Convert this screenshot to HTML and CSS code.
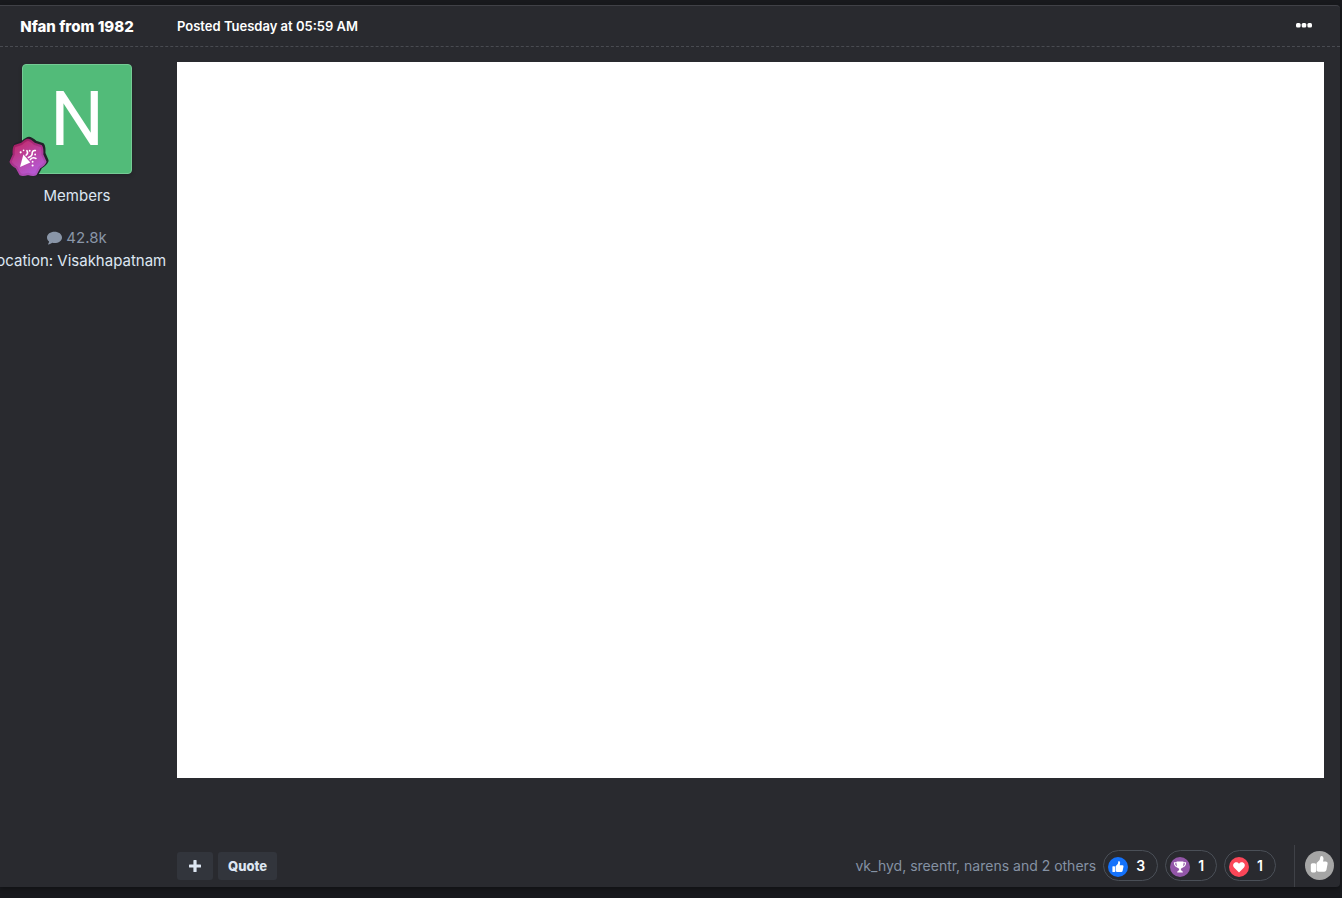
FILE: index.html
```html
<!DOCTYPE html>
<html lang="en">
<head>
    <meta charset="UTF-8">
    <meta name="viewport" content="width=device-width, initial-scale=1.0">
    <title>Topic post</title>
    <link rel="stylesheet" href="styles.css">
</head>
<body>
    <article class="post">
        <header class="post-header">
            <h3 class="author-name"><a href="#">Nfan from 1982</a></h3>
            <a class="post-date" href="#">Posted Tuesday at 05:59 AM</a>
            <button class="more-button" type="button" aria-label="More options">
                <svg width="16" height="6" viewBox="0 0 16 6" fill="currentColor">
                    <rect x="0" y="1" width="4.6" height="4.4" rx="1.5"/>
                    <rect x="5.7" y="1" width="4.6" height="4.4" rx="1.5"/>
                    <rect x="11.4" y="1" width="4.6" height="4.4" rx="1.5"/>
                </svg>
            </button>
        </header>

        <div class="post-body">
            <aside class="author">
                <div class="avatar">
                    <a class="avatar-photo" href="#">N</a>
                    <svg class="rank-badge" width="42" height="44" viewBox="0 0 40 40" preserveAspectRatio="none">
                        <defs>
                            <linearGradient id="rank-fill" x1="0.2" y1="0" x2="0.8" y2="1">
                                <stop offset="0" stop-color="#c22a68"/>
                                <stop offset="1" stop-color="#b45ee0"/>
                            </linearGradient>
                            <linearGradient id="rank-edge" x1="0.2" y1="0" x2="0.8" y2="1">
                                <stop offset="0" stop-color="#a3195b"/>
                                <stop offset="1" stop-color="#b055c8"/>
                            </linearGradient>
                            <path id="rank-shape" stroke-linejoin="round" d="M20 3.6 Q22 3.6 26.1 7.2 L32.6 9.2 Q34 11 33.6 16.9 L36.6 23.4 Q35.6 26 30.9 28.7 L27.4 34.8 Q25 36 20 34.4 Q15 36 12.6 34.8 L9.1 28.7 Q4.4 26 3.4 23.4 L6.4 16.9 Q6 11 7.4 9.2 L13.9 7.2 Q18 3.6 20 3.6Z"/>
                        </defs>
                        <use href="#rank-shape" x="1" y="-1" fill="#212329" stroke="#212329" stroke-width="4"/>
                        <use href="#rank-shape" fill="url(#rank-fill)" stroke="url(#rank-edge)" stroke-width="2"/>
                        <path fill="#fff" d="M15.6 16.8 L22.2 24.2 L12.4 28.2Z"/>
                        <path fill="none" stroke="#fff" stroke-width="1.5" stroke-linecap="round" d="M18.2 17.4 Q20.6 15.8 19 13.4 M20.4 19.6 Q24.4 18.4 24 15.2 Q24.4 12.8 27 13.2 M22.2 21.4 Q24.4 18.8 27.6 20.4"/>
                        <g fill="#fff">
                            <circle cx="13" cy="14.8" r="1"/>
                            <circle cx="15.8" cy="13" r="0.8"/>
                            <circle cx="21.6" cy="13.4" r="0.9"/>
                            <circle cx="26.8" cy="16.8" r="0.9"/>
                            <circle cx="24.4" cy="23.4" r="0.9"/>
                            <circle cx="24.4" cy="26.8" r="1"/>
                        </g>
                    </svg>
                </div>
                <div class="author-group">Members</div>
                <ul class="author-stats">
                    <li>
                        <a class="post-count" href="#">
                            <svg width="15" height="14" viewBox="0 0 15 14" fill="currentColor">
                                <path d="M7.5 0.8C11.6 0.8 15 3.2 15 6.4S11.6 12 7.5 12c-.8 0-1.5-.1-2.2-.2C4.2 12.7 2.8 13.3 1.3 13.4c-.3 0-.4-.3-.2-.5.6-.7.9-1.4 1-2.3C.8 9.5 0 8 0 6.4 0 3.2 3.4.8 7.5.8Z"/>
                            </svg>
                            42.8k
                        </a>
                    </li>
                    <li class="location">Location: Visakhapatnam</li>
                </ul>
            </aside>

            <div class="post-main">
                <div class="post-content"></div>
            </div>
        </div>

        <footer class="post-footer">
            <div class="controls">
                <button class="control" type="button" aria-label="Multi-quote">
                    <svg width="12" height="12" viewBox="0 0 12 12" fill="currentColor">
                        <path d="M5 0h2a.6.6 0 0 1 .6.6v3.8h3.8a.6.6 0 0 1 .6.6v2a.6.6 0 0 1-.6.6H7.6v3.8a.6.6 0 0 1-.6.6H5a.6.6 0 0 1-.6-.6V7.6H.6A.6.6 0 0 1 0 7V5a.6.6 0 0 1 .6-.6h3.8V.6A.6.6 0 0 1 5 0Z"/>
                    </svg>
                </button>
                <button class="control" type="button">Quote</button>
            </div>
            <div class="reactions">
                <a class="reaction-names" href="#">vk_hyd, sreentr, narens and 2 others</a>
                <button class="reaction" type="button" aria-label="Like 3">
                    <svg width="20" height="20" viewBox="0 0 20 20">
                        <circle cx="10" cy="10" r="10" fill="#1472fb"/>
                        <rect x="4.4" y="9.2" width="2.6" height="5.8" rx="0.6" fill="#fff"/>
                        <path fill="#fff" d="M7.6 9.2 L9.9 6.7 L10.3 4.6 Q10.6 3.8 11.5 4.3 Q12.8 5.2 11.7 8.2 H14.6 Q15.9 8.5 15.5 9.6 L14.6 14 Q14.3 15 13.3 15 H9.3 L7.6 14.4Z"/>
                    </svg>
                    3
                </button>
                <button class="reaction" type="button" aria-label="Thanks 1">
                    <svg width="20" height="20" viewBox="0 0 20 20">
                        <circle cx="10" cy="10" r="10" fill="#9256a8"/>
                        <path fill="#fff" d="M6.6 4.4h6.8v2.8q0 3.5-2.5 4.5v1.6q1.9.2 2 2.1H7.1q.1-1.9 2-2.1v-1.6Q6.6 10.7 6.6 7.2Z"/>
                        <path fill="none" stroke="#fff" stroke-width="1.1" d="M7 5.7H4.4q.1 3.7 3.5 4.4M13 5.7h2.6q-.1 3.7-3.5 4.4"/>
                    </svg>
                    1
                </button>
                <button class="reaction" type="button" aria-label="Love 1">
                    <svg width="20" height="20" viewBox="0 0 20 20">
                        <circle cx="10" cy="10" r="10" fill="#fb4658"/>
                        <path fill="#fff" d="M10 15.4 L5 10.4 C2.8 7.8 5.2 4.7 8 5.3 Q9.2 5.6 10 6.7 Q10.8 5.6 12 5.3 C14.8 4.7 17.2 7.8 15 10.4Z"/>
                    </svg>
                    1
                </button>
                <button class="react-button" type="button" aria-label="Like this">
                    <svg width="29" height="29" viewBox="0 0 29 29">
                        <circle cx="14.5" cy="14.5" r="14.5" fill="#a5a5a5"/>
                        <rect x="5.8" y="12.2" width="5.4" height="9.2" rx="1.6" fill="#fff"/>
                        <path fill="#fff" d="M11.6 12 L14.6 9 L15.3 6 Q15.9 4.3 17.5 5.2 Q19.2 6.8 18 10.4 H21 Q23 10.8 22.6 12.8 L21.4 18.9 Q20.9 20.7 19.3 20.7 H13.6 Q11.6 20.4 11.6 19.2Z"/>
                    </svg>
                </button>
            </div>
        </footer>
    </article>
</body>
</html>
```
FILE: styles.css
```css
* {
    box-sizing: border-box;
}

body {
    margin: 0;
    padding: 5px 2px 11px 0;
    background-color: #18191d;
    color: #dde6f2;
    font-family: Inter, "Liberation Sans", sans-serif;
    font-size: 15px;
    line-height: 23px;
    overflow-x: hidden;
}

a {
    color: inherit;
    text-decoration: none;
}

button {
    border: none;
    background: none;
    color: inherit;
    font: inherit;
    padding: 0;
    cursor: pointer;
}

svg {
    display: block;
}

.post {
    background-color: #292a2f;
    border-top: 1px solid #404147;
    border-radius: 0 4px 4px 0;
    box-shadow: 0 2px 4px rgba(0, 0, 0, 0.3);
}

.post-header {
    display: grid;
    grid-template-columns: 154px 1fr auto;
    column-gap: 23px;
    align-items: center;
    height: 41px;
    padding-right: 28px;
    border-bottom: 1px dashed #494b51;
    color: #fff;
}

.author-name {
    margin: 0;
    font-size: 15px;
    font-weight: 800;
    text-align: center;
}

.post-date {
    font-size: 13px;
    font-weight: 600;
}

.more-button {
    padding-bottom: 2px;
}

.post-body {
    display: grid;
    grid-template-columns: 154px 1fr;
    column-gap: 23px;
    padding: 15px 16px 0 0;
}

.author {
    display: flex;
    flex-direction: column;
    align-items: center;
    padding-top: 2px;
}

.avatar {
    position: relative;
    margin-bottom: 10px;
}

.avatar-photo {
    display: flex;
    align-items: center;
    justify-content: center;
    width: 110px;
    height: 110px;
    border: 1px solid #75ca95;
    border-radius: 4px;
    background-color: #52bb79;
    color: #fff;
    font-family: Roboto, sans-serif;
    font-size: 76px;
    box-shadow: 0 2px 4px rgba(0, 0, 0, 0.2);
}

.rank-badge {
    position: absolute;
    left: -15px;
    bottom: -6px;
    overflow: visible;
}

.author-stats {
    display: flex;
    flex-direction: column;
    align-items: center;
    margin: 19px 0 0;
    padding: 0;
    list-style: none;
    white-space: nowrap;
}

.post-count {
    display: flex;
    align-items: center;
    gap: 4px;
    color: #8a96a8;
}

.post-content {
    aspect-ratio: 1147 / 716;
    background-color: #fff;
}

.post-footer {
    display: flex;
    justify-content: space-between;
    margin-top: 67px;
    padding-left: 177px;
}

.controls {
    display: flex;
    align-items: center;
    gap: 5px;
}

.control {
    display: flex;
    align-items: center;
    justify-content: center;
    min-width: 36px;
    height: 28px;
    padding: 0 10px;
    border-radius: 3px;
    background-color: #32353c;
    font-size: 13px;
    font-weight: 800;
}

.reactions {
    display: flex;
    align-items: center;
    gap: 7px;
}

.reaction-names {
    margin-bottom: 1px;
    color: #8592a4;
    font-size: 14px;
}

.reaction {
    display: flex;
    align-items: center;
    gap: 8px;
    height: 31px;
    margin-bottom: 1px;
    padding: 0 12px 0 4px;
    border: 1px solid #4a4f57;
    border-radius: 16px;
    color: #fff;
    font-size: 14px;
    font-weight: 600;
}

.reaction svg {
    margin-top: 2px;
}

.react-button {
    height: 42px;
    margin-left: 11px;
    padding: 0 6px 1px 10px;
    border-left: 1px solid #3f4147;
}
```
